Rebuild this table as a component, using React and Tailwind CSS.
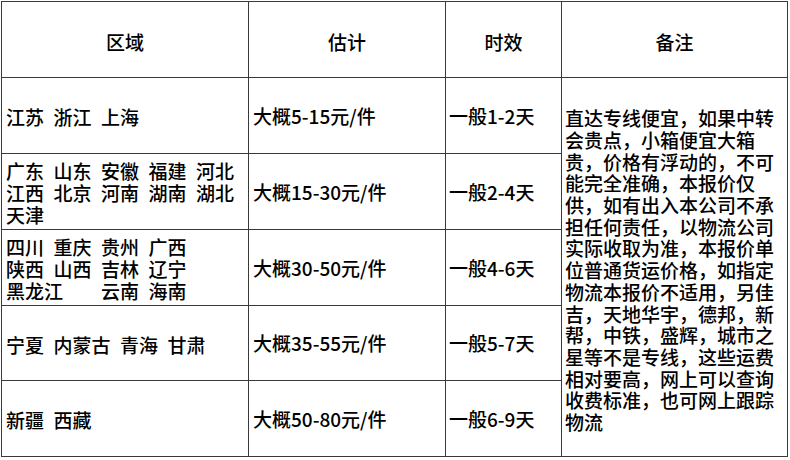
import React from "react";

const headers = ["区域", "估计", "时效", "备注"];

// each row: region lines (groups split by half-em gaps), price, days
const rows = [
  { lines: [["江苏", "浙江", "上海"]], price: "大概5-15元/件", days: "一般1-2天", h: "h-[76px]" },
  {
    lines: [
      ["广东", "山东", "安徽", "福建", "河北"],
      ["江西", "北京", "河南", "湖南", "湖北"],
      ["天津"],
    ],
    price: "大概15-30元/件",
    days: "一般2-4天",
    h: "h-[76px]",
  },
  {
    lines: [
      ["四川", "重庆", "贵州", "广西"],
      ["陕西", "山西", "吉林", "辽宁"],
      ["黑龙江", null, "云南", "海南"],
    ],
    price: "大概30-50元/件",
    days: "一般4-6天",
    h: "h-[76px]",
  },
  { lines: [["宁夏", "内蒙古", "青海", "甘肃"]], price: "大概35-55元/件", days: "一般5-7天", h: "h-[75px]" },
  { lines: [["新疆", "西藏"]], price: "大概50-80元/件", days: "一般6-9天", h: "h-[76px]" },
];

const remark = [
  "直达专线便宜，如果中转",
  "会贵点，小箱便宜大箱",
  "贵，价格有浮动的，不可",
  "能完全准确，本报价仅",
  "供，如有出入本公司不承",
  "担任何责任，以物流公司",
  "实际收取为准，本报价单",
  "位普通货运价格，如指定",
  "物流本报价不适用，另佳",
  "吉，天地华宇，德邦，新",
  "帮，中铁，盛辉，城市之",
  "星等不是专线，这些运费",
  "相对要高，网上可以查询",
  "收费标准，也可网上跟踪",
  "物流",
];

const cell = "border-r border-b border-[#3a3a3a] flex items-center";

function RegionLines({ lines }) {
  return (
    <div className="flex flex-col">
      {lines.map((groups, i) => (
        <div key={i} className="flex gap-[9.5px] whitespace-nowrap">
          {groups.map((g, j) =>
            g === null ? <span key={j} className="w-[19px]" /> : <span key={j}>{g}</span>
          )}
        </div>
      ))}
    </div>
  );
}

export default function App() {
  return (
    <div className="w-[790px] h-[460px] bg-white pl-[1px] pt-[1px]">
      <div
        className="grid grid-cols-[247px_197px_116px_226px] w-[787px] border-l border-t border-[#3a3a3a] text-[19px] leading-[21.7px] font-medium text-black"
        style={{ fontFamily: '"Noto Sans CJK SC", "Noto Sans", sans-serif' }}
      >
        {headers.map((h) => (
          <div key={h} className={`${cell} h-[76px] justify-center pt-[5px]`}>
            {h}
          </div>
        ))}

        {rows.map((r, i) => (
          <React.Fragment key={i}>
            <div className={`${cell} ${r.h} pl-[4px] pt-[3px] col-start-1`}>
              <RegionLines lines={r.lines} />
            </div>
            <div className={`${cell} ${r.h} pl-[4px] whitespace-nowrap`}>{r.price}</div>
            <div className={`${cell} ${r.h} pl-[3px] whitespace-nowrap`}>{r.days}</div>
            {i === 0 && (
              <div className={`${cell} row-span-5 pl-[3px] pt-[6px]`}>
                <div className="flex flex-col whitespace-nowrap">
                  {remark.map((line, k) => (
                    <div key={k}>{line}</div>
                  ))}
                </div>
              </div>
            )}
          </React.Fragment>
        ))}
      </div>
    </div>
  );
}
